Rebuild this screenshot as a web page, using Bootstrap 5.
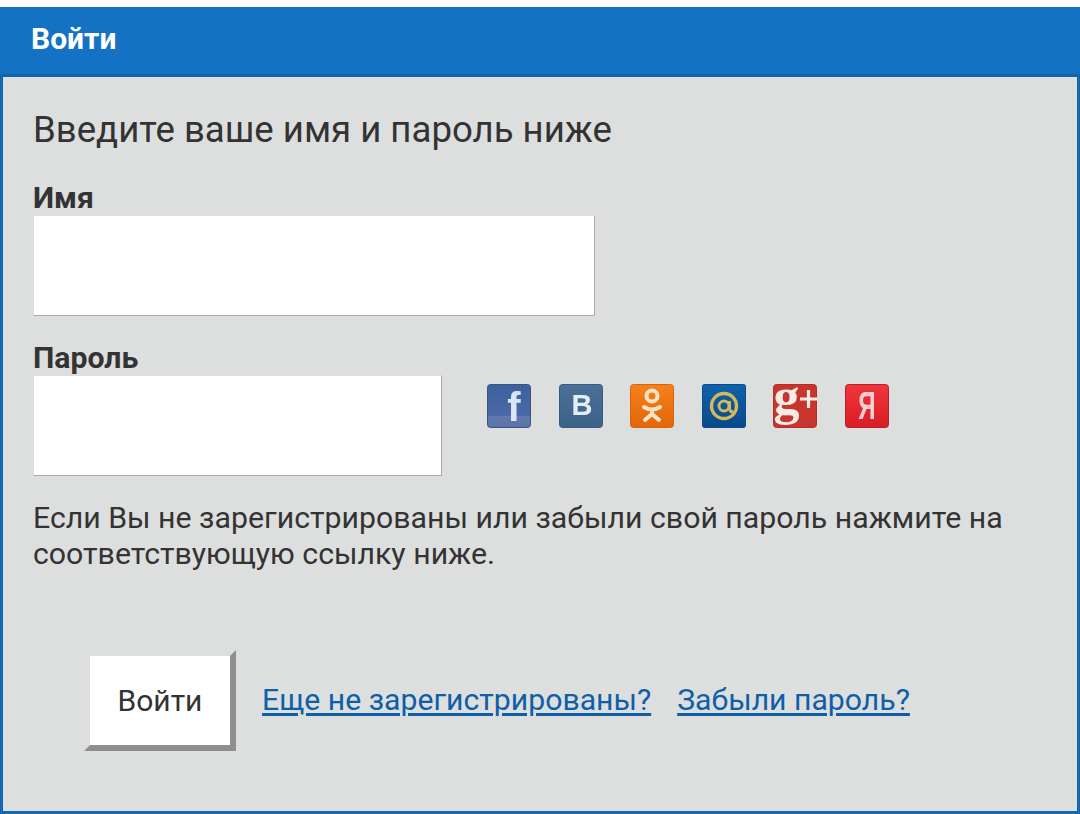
<!DOCTYPE html>
<html lang="ru"><head><meta charset="utf-8"><title>Войти</title>
<link href="https://cdn.jsdelivr.net/npm/bootstrap@5.3.0/dist/css/bootstrap.min.css" rel="stylesheet">
<style>
html,body{height:814px;overflow:hidden;background:#fff}
body{font-family:Roboto,"Noto Sans",sans-serif;color:#333;padding-top:7px}
.login-box{height:807px;background:#dddfdf;border:solid #1468b0;border-width:0 3px 3px 3px;border-top:0}
.login-head{height:70px;margin:0 -3px;padding:0 31px;background:#1472c4;border-bottom:3px solid #0f64ab;color:#fff;font-size:30px;font-weight:700;line-height:63px}
.login-body{padding:28px 30px 0}
.login-title{font-size:36.6px;font-weight:400;line-height:50px;margin:0 0 28px;color:#333}
.field-label{font-size:30.2px;font-weight:700;line-height:30px;margin:0 0 2px;display:block;color:#333}
.field-input{display:block;height:101px;background:#fff;border:solid;border-width:1px;border-color:#dddfdf #aaa #aaa #dddfdf;padding:0 8px;font-size:28px}
.w-name{width:562px;margin-bottom:27px}
.w-pass{width:409px}
.social-row{gap:27.6px;margin-left:45px;margin-top:9px}
.social-row svg{display:block;width:44px;height:44px;overflow:visible;filter:blur(.4px)}
.hint{font-size:30.27px;line-height:35.5px;margin:24px 0 0;color:#333}
.action-row{margin:79px 0 0 51px}
.login-btn{width:152px;height:101px;background:#fff;color:#333;font-size:30px;padding:0;border-style:solid;border-width:6px;border-color:#dddfdf #8e8e8e #8e8e8e #dddfdf;border-radius:0;--bs-btn-hover-bg:#fff;--bs-btn-hover-color:#333}
.act-link{font-size:30.2px;color:#0f5ea8;margin:0 0 2px 26px;text-underline-offset:3px}
.svg-txt{font-family:"Liberation Sans",sans-serif;font-weight:700;text-anchor:middle}
.svg-serif{font-family:"Liberation Serif",serif}
</style></head>
<body>
<div class="login-box">
  <div class="login-head">Войти</div>
  <form class="login-body">
    <h1 class="login-title">Введите ваше имя и пароль ниже</h1>
    <label class="field-label" for="nm">Имя</label>
    <input id="nm" class="field-input w-name" type="text">
    <label class="field-label" for="pw">Пароль</label>
    <div class="d-flex align-items-start">
      <input id="pw" class="field-input w-pass" type="password">
      <div class="d-flex social-row">
        <svg viewBox="0 0 44 44"><defs><linearGradient id="gf" x1="0" y1="0" x2="0" y2="1"><stop offset="0" stop-color="#3c619e"/><stop offset=".72" stop-color="#4a68a6"/><stop offset=".73" stop-color="#6279ae"/><stop offset="1" stop-color="#5a72a8"/></linearGradient></defs><rect x=".5" y=".5" width="43" height="43" rx="3" fill="url(#gf)" stroke="#38547f"/><text class="svg-txt" x="27" y="37" font-size="40" fill="#d9e4f4">f</text></svg>
        <svg viewBox="0 0 44 44"><defs><linearGradient id="gv" x1="0" y1="0" x2="0" y2="1"><stop offset="0" stop-color="#4a7098"/><stop offset="1" stop-color="#3d6189"/></linearGradient></defs><rect x=".5" y=".5" width="43" height="43" rx="3" fill="url(#gv)" stroke="#375a80"/><text class="svg-txt" x="23" y="31" font-size="29" fill="#e4ecf4">В</text></svg>
        <svg viewBox="0 0 44 44"><defs><linearGradient id="go" x1="0" y1="0" x2="0" y2="1"><stop offset="0" stop-color="#f5811b"/><stop offset="1" stop-color="#e3660b"/></linearGradient></defs><rect x=".5" y=".5" width="43" height="43" rx="3" fill="url(#go)" stroke="#d9620f"/><circle cx="22" cy="12" r="5.500" fill="none" stroke="#fbe3c8" stroke-width="4"/><path d="M14 23q8 5 16 0M22 26v4M15 36l7-6 7 6" fill="none" stroke="#fbe3c8" stroke-width="4" stroke-linecap="round"/></svg>
        <svg viewBox="0 0 44 44"><defs><linearGradient id="gm" x1="0" y1="0" x2="0" y2="1"><stop offset="0" stop-color="#0e62ac"/><stop offset="1" stop-color="#07498a"/></linearGradient></defs><rect x=".5" y=".5" width="43" height="43" rx="2" fill="url(#gm)" stroke="#0a4c8c"/><circle cx="22" cy="22" r="12.500" fill="none" stroke="#d4b85a" stroke-width="3.400"/><circle cx="22" cy="22" r="5" fill="none" stroke="#d4b85a" stroke-width="3"/><path d="M27.500 17v7q0 4 4 4" fill="none" stroke="#d4b85a" stroke-width="3"/></svg>
        <svg viewBox="0 0 44 44"><rect x=".5" y=".5" width="43" height="43" rx="3" fill="#c8352c" stroke="#b52d26"/><text class="svg-txt svg-serif" x="13.500" y="30" font-size="52" fill="#f7ebe8">g</text><path d="M27 15h17M35.500 6v18" stroke="#f7ebe8" stroke-width="3.200"/></svg>
        <svg viewBox="0 0 44 44"><defs><linearGradient id="gy" x1="0" y1="0" x2="0" y2="1"><stop offset="0" stop-color="#f0353c"/><stop offset="1" stop-color="#d91d25"/></linearGradient></defs><rect x=".5" y=".5" width="43" height="43" rx="3" fill="url(#gy)" stroke="#b3222a"/><text class="svg-txt" transform="translate(22 35) scale(.62 1)" font-size="39" fill="#f8cfd0">Я</text></svg>
      </div>
    </div>
    <p class="hint">Если Вы не зарегистрированы или забыли свой пароль нажмите на соответствующую ссылку ниже.</p>
    <div class="d-flex align-items-center action-row">
      <button type="button" class="btn login-btn">Войти</button>
      <a class="act-link" href="#">Еще не зарегистрированы?</a>
      <a class="act-link" href="#">Забыли пароль?</a>
    </div>
  </form>
</div>
</body></html>
